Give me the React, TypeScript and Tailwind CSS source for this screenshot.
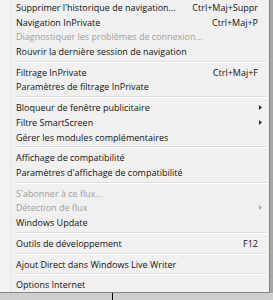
const items: (
  | { label: string; shortcut?: string; disabled?: boolean; arrow?: boolean }
  | "sep"
)[] = [
  { label: "Supprimer l'historique de navigation...", shortcut: "Ctrl+Maj+Suppr" },
  { label: "Navigation InPrivate", shortcut: "Ctrl+Maj+P" },
  { label: "Diagnostiquer les problèmes de connexion...", disabled: true },
  { label: "Rouvrir la dernière session de navigation" },
  "sep",
  { label: "Filtrage InPrivate", shortcut: "Ctrl+Maj+F" },
  { label: "Paramètres de filtrage InPrivate" },
  "sep",
  { label: "Bloqueur de fenêtre publicitaire", arrow: true },
  { label: "Filtre SmartScreen", arrow: true },
  { label: "Gérer les modules complémentaires" },
  "sep",
  { label: "Affichage de compatibilité" },
  { label: "Paramètres d'affichage de compatibilité" },
  "sep",
  { label: "S'abonner à ce flux...", disabled: true },
  { label: "Détection de flux", disabled: true, arrow: true },
  { label: "Windows Update" },
  "sep",
  { label: "Outils de développement", shortcut: "F12" },
  "sep",
  { label: "Ajout Direct dans Windows Live Writer" },
  "sep",
  { label: "Options Internet" },
];

const Arrow = ({ disabled }: { disabled?: boolean }) => (
  <svg width="3" height="5" viewBox="0 0 3 5" className="shrink-0">
    <path d="M0 0L3 2.5L0 5Z" fill={disabled ? "#a8a8a8" : "#303030"} />
  </svg>
);

export default function App() {
  return (
    <div className="w-[273px] h-[300px] overflow-hidden bg-[#c4c4c4] font-['Open_Sans',sans-serif] flex flex-col">
      <div className="flex">
        <div className="w-[270px] h-[293px] bg-[#f0f0f0] border-r border-b border-[#858585] flex">
          <div className="w-[11px] border-r border-[#e4e4e4] bg-[#f3f3f3]" />
          <div className="flex-1 flex flex-col">
            {items.map((it, i) =>
              it === "sep" ? (
                <div key={i} className="h-[6px] flex flex-col justify-center pl-[4px] pr-[2px]">
                  <div className="h-px bg-[#dedede]" />
                  <div className="h-px bg-white" />
                </div>
              ) : (
                <div
                  key={i}
                  className={`h-[14.9px] flex items-center pl-[5px] pr-[7px] text-[9px] leading-none ${
                    it.disabled ? "text-[#9e9e9e]" : "text-[#111111]"
                  }`}
                >
                  <span className="flex-1 whitespace-nowrap">{it.label}</span>
                  {it.shortcut && <span className="mr-[4px]">{it.shortcut}</span>}
                  {it.arrow && <Arrow disabled={it.disabled} />}
                </div>
              )
            )}
          </div>
        </div>
        <div className="flex-1 bg-[#a6a6a6]" />
      </div>
      <div className="flex-1 flex bg-[#cfcfcf]">
        <div className="ml-[112px] w-px bg-black" />
      </div>
    </div>
  );
}
